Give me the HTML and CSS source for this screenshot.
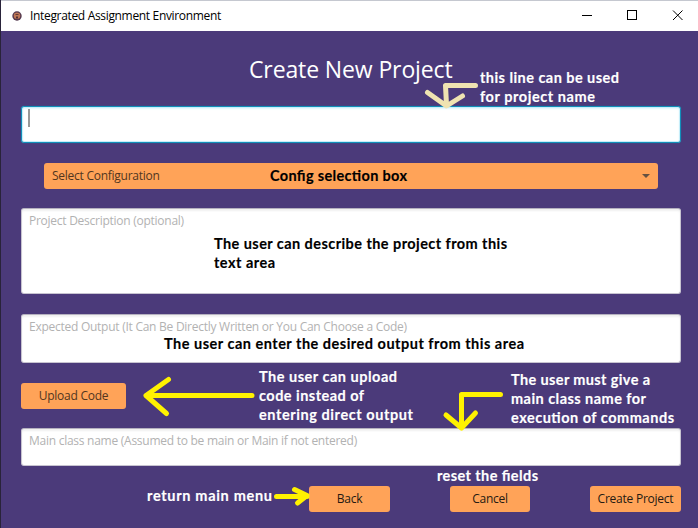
FILE: index.html
```html
<!DOCTYPE html>
<html lang="en">
<head>
<meta charset="utf-8">
<title>Integrated Assignment Environment</title>
<link rel="stylesheet" href="styles.css">
</head>
<body>
<div class="window">
  <header class="titlebar">
    <svg class="app-icon" width="10" height="10" viewBox="0 0 10 10"><circle cx="5" cy="5" r="4.7" fill="#51364c"/><circle cx="5" cy="4.8" r="3.300" fill="#bd7656"/><path d="M3.500 3h3v1h-3z" fill="#643a35"/><path d="M4.200 5.500h1.600v2H4.200z" fill="#39212c"/></svg>
    <span class="app-name">Integrated Assignment Environment</span>
    <svg class="controls" width="116" height="30" viewBox="0 0 116 30" fill="none" stroke="#000" shape-rendering="crispEdges"><path d="M0 14.5h10M45.5 9.5h9v9h-9z"/><path d="M91 9.5l9.500 9.500M100.500 9.500l-9.500 9.500" shape-rendering="auto"/></svg>
  </header>
  <main class="form">
    <h1 class="heading"><span>Create New Project</span></h1>
    <div class="field name"><i class="caret"></i></div>
    <div class="select"><span>Select Configuration</span><i class="arrow"></i></div>
    <div class="field description">Project Description (optional)</div>
    <div class="field output">Expected Output (It Can Be Directly Written or You Can Choose a Code)</div>
    <button class="button upload">Upload Code</button>
    <div class="field main-class">Main class name (Assumed to be main or Main if not entered)</div>
    <footer class="actions">
      <button class="button back">Back</button>
      <button class="button cancel">Cancel</button>
      <button class="button create">Create Project</button>
    </footer>
  </main>
  <svg class="notes" width="698" height="528" viewBox="0 0 698 528">
    <g class="arrow-cream"><path d="M475.500 85.500H445.500L446.500 105M427.500 92.500L446.500 106L462.500 96"/></g>
    <g class="arrow-yellow">
      <path d="M252 395.500H146M168.500 379.500L146 395.500L166.500 413.500"/>
      <path d="M500.500 394.500H461.500V428M446 415L461.500 428L475.500 413"/>
      <path d="M276.500 496.500H307M294.500 489.500L307 495.500L297.500 503"/>
    </g>
    <g class="white">
      <text x="480" y="83" textLength="139">this line can be used</text>
      <text x="480" y="102" textLength="115">for project name</text>
      <text x="259" y="382" textLength="138">The user can upload</text>
      <text x="259" y="401" textLength="105">code instead of</text>
      <text x="259" y="420" textLength="154">entering direct output</text>
      <text x="511" y="385" textLength="139">The user must give a</text>
      <text x="511" y="404" textLength="135">main class name for</text>
      <text x="511" y="423" textLength="163">execution of commands</text>
      <text x="437" y="481" textLength="101">reset the fields</text>
      <text x="147" y="501" textLength="125">return main menu</text>
    </g>
    <g class="black">
      <text x="270" y="181" textLength="137">Config selection box</text>
      <text x="214" y="249" textLength="293">The user can describe the project from this</text>
      <text x="214" y="268" textLength="61">text area</text>
      <text x="164" y="349" textLength="360">The user can enter the desired output from this area</text>
    </g>
  </svg>
</div>
</body>
</html>
```
FILE: styles.css
```css
* { box-sizing: border-box; }
body { margin: 0; overflow: hidden; }
.window {
  position: relative;
  width: 698px;
  height: 528px;
  border-left: 1px solid #29233a;
  background: #4b3a7a;
  font: 12px/16px "Open Sans", "Noto Sans", sans-serif;
  white-space: nowrap;
}
.titlebar {
  display: flex;
  align-items: center;
  height: 31px;
  padding: 0 0 0 11px;
  border-top: 1px solid #c5c8d0;
  background: #fff;
  color: #000;
}
.app-name { margin-left: 8px; letter-spacing: -0.33px; }
.controls { margin-left: auto; }
.form {
  display: flex;
  flex-direction: column;
  padding: 0 17px 0 20px;
}
.heading {
  height: 75px;
  margin: 0;
  padding: 22px 0 0 228px;
  color: #fff;
  font-size: 23px;
  font-weight: 400;
  letter-spacing: -0.12px;
  line-height: 32px;
}
.field {
  width: 660px;
  padding: 3px 7px;
  border: 1px solid #c7c3d0;
  border-top-color: #b5b1bf;
  border-radius: 3px;
  background: #fff;
  box-shadow: inset 0 2px 2px #f0f0f0;
  color: #b2b2b2;
  letter-spacing: -0.26px;
  line-height: 17px;
}
.name {
  height: 37px;
  padding-left: 6px;
  border: 1px solid #118fb9;
  box-shadow: 0 0 1px #118fb9, inset 0 0 0 1px #c7eefa, inset 0 1px 2px 1px #dff5fb;
}
.caret { display: block; width: 2px; height: 18px; margin-top: -1px; background: #999; }
.select {
  display: flex;
  align-items: center;
  justify-content: space-between;
  width: 614px;
  height: 26px;
  margin: 20px 0 19px 23px;
  padding: 0 8px;
  border-radius: 3px;
  background: #ffa358;
  color: #51361f;
  letter-spacing: -0.26px;
}
.arrow { border: 4px solid transparent; border-top-color: #655141; border-bottom: 0; }
.description { height: 86px; }
.output { height: 49px; margin-top: 20px; }
.button {
  display: flex;
  align-items: center;
  justify-content: center;
  height: 26px;
  padding: 0;
  border: 0;
  border-radius: 3px;
  background: #ffa358;
  color: #251a12;
  font: inherit;
  letter-spacing: -0.24px;
}
.upload { width: 105px; margin: 20px 0 19px; color: #51361f; }
.main-class { height: 38px; }
.actions { display: flex; margin: 20px 0 0 288px; }
.back { width: 81px; }
.cancel { width: 80px; margin-left: 60px; }
.create { width: 91px; margin-left: 60px; }
.notes {
  position: absolute;
  top: 0;
  left: -1px;
  font: 700 14.5px Lato, sans-serif;
}
.notes path { fill: none; stroke-width: 5; stroke-linecap: round; stroke-linejoin: round; }
.arrow-cream { stroke: #efe3b1; }
.arrow-yellow { stroke: #fff200; }
.notes text { stroke-width: 0.15px; }
.white { fill: #fff; }
.white text { stroke: #fff; }
.black { fill: #000; }
.black text { stroke: #000; }
```
